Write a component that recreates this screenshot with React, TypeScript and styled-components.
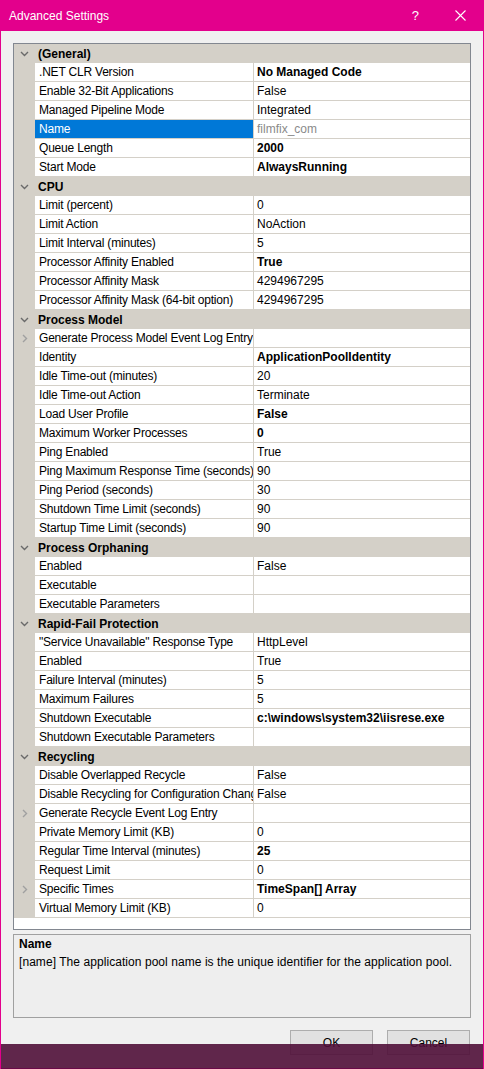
import React, { FC } from "react";
import styled, { createGlobalStyle } from "styled-components";

type Row = {
  label: string;
  value?: string;
  bold?: boolean;
  expand?: boolean;
  selected?: boolean;
  readOnly?: boolean;
};

type Category = { title: string; rows: Row[] };

const categories: Category[] = [
  {
    title: "(General)",
    rows: [
      { label: ".NET CLR Version", value: "No Managed Code", bold: true },
      { label: "Enable 32-Bit Applications", value: "False" },
      { label: "Managed Pipeline Mode", value: "Integrated" },
      { label: "Name", value: "filmfix_com", selected: true, readOnly: true },
      { label: "Queue Length", value: "2000", bold: true },
      { label: "Start Mode", value: "AlwaysRunning", bold: true },
    ],
  },
  {
    title: "CPU",
    rows: [
      { label: "Limit (percent)", value: "0" },
      { label: "Limit Action", value: "NoAction" },
      { label: "Limit Interval (minutes)", value: "5" },
      { label: "Processor Affinity Enabled", value: "True", bold: true },
      { label: "Processor Affinity Mask", value: "4294967295" },
      { label: "Processor Affinity Mask (64-bit option)", value: "4294967295" },
    ],
  },
  {
    title: "Process Model",
    rows: [
      { label: "Generate Process Model Event Log Entry", expand: true },
      { label: "Identity", value: "ApplicationPoolIdentity", bold: true },
      { label: "Idle Time-out (minutes)", value: "20" },
      { label: "Idle Time-out Action", value: "Terminate" },
      { label: "Load User Profile", value: "False", bold: true },
      { label: "Maximum Worker Processes", value: "0", bold: true },
      { label: "Ping Enabled", value: "True" },
      { label: "Ping Maximum Response Time (seconds)", value: "90" },
      { label: "Ping Period (seconds)", value: "30" },
      { label: "Shutdown Time Limit (seconds)", value: "90" },
      { label: "Startup Time Limit (seconds)", value: "90" },
    ],
  },
  {
    title: "Process Orphaning",
    rows: [
      { label: "Enabled", value: "False" },
      { label: "Executable" },
      { label: "Executable Parameters" },
    ],
  },
  {
    title: "Rapid-Fail Protection",
    rows: [
      { label: "\"Service Unavailable\" Response Type", value: "HttpLevel" },
      { label: "Enabled", value: "True" },
      { label: "Failure Interval (minutes)", value: "5" },
      { label: "Maximum Failures", value: "5" },
      { label: "Shutdown Executable", value: "c:\\windows\\system32\\iisrese.exe", bold: true },
      { label: "Shutdown Executable Parameters" },
    ],
  },
  {
    title: "Recycling",
    rows: [
      { label: "Disable Overlapped Recycle", value: "False" },
      { label: "Disable Recycling for Configuration Changes", value: "False" },
      { label: "Generate Recycle Event Log Entry", expand: true },
      { label: "Private Memory Limit (KB)", value: "0" },
      { label: "Regular Time Interval (minutes)", value: "25", bold: true },
      { label: "Request Limit", value: "0" },
      { label: "Specific Times", value: "TimeSpan[] Array", bold: true, expand: true },
      { label: "Virtual Memory Limit (KB)", value: "0" },
    ],
  },
];

const GlobalStyle = createGlobalStyle`
  html, body {
    margin: 0;
    padding: 0;
    background: #f0f0f0;
  }
  body {
    font-family: "Liberation Sans", Arial, sans-serif;
    font-size: 12px;
    color: #000;
  }
`;

const ChevronDown: FC = () => (
  <svg width="9" height="6" viewBox="0 0 9 6">
    <path d="M1 1 L4.5 4.5 L8 1" fill="none" stroke="#6a6a6a" strokeWidth="1.4" />
  </svg>
);

const ChevronRight: FC = () => (
  <svg width="6" height="9" viewBox="0 0 6 9">
    <path d="M1 1 L4.5 4.5 L1 8" fill="none" stroke="#a0a0a0" strokeWidth="1.4" />
  </svg>
);

const App: FC = () => {
  return (
    <>
      <GlobalStyle />
      <Window>
        <TitleBar>
          <span>Advanced Settings</span>
          <TitleButtons>
            <span className="help">?</span>
            <svg width="11" height="11" viewBox="0 0 11 11">
              <path d="M0.5 0.5 L10.5 10.5 M10.5 0.5 L0.5 10.5" stroke="#fff" strokeWidth="1.1" />
            </svg>
          </TitleButtons>
        </TitleBar>
        <Body>
          <Grid>
            {categories.map((cat) => (
              <React.Fragment key={cat.title}>
                <CategoryRow>
                  <Gutter>
                    <ChevronDown />
                  </Gutter>
                  <span>{cat.title}</span>
                </CategoryRow>
                {cat.rows.map((row, i) => (
                  <PropRow key={cat.title + i}>
                    <Gutter>{row.expand && <ChevronRight />}</Gutter>
                    <LabelCell $selected={row.selected}>{row.label}</LabelCell>
                    <ValueCell $bold={row.bold} $readOnly={row.readOnly}>
                      {row.value}
                    </ValueCell>
                  </PropRow>
                ))}
              </React.Fragment>
            ))}
            <GridFiller />
          </Grid>
          <Description>
            <h4>Name</h4>
            <p>[name] The application pool name is the unique identifier for the application pool.</p>
          </Description>
          <ButtonBar>
            <DialogButton>OK</DialogButton>
            <DialogButton>Cancel</DialogButton>
          </ButtonBar>
        </Body>
        <Taskbar />
      </Window>
    </>
  );
};

export default App;

const Window = styled.div`
  position: relative;
  width: 484px;
  height: 1069px;
  box-sizing: border-box;
  border-left: 1px solid #e3008c;
  border-right: 1px solid #e3008c;
  background: #f0f0f0;
  display: flex;
  flex-direction: column;
  overflow: hidden;
`;

const TitleBar = styled.div`
  height: 31px;
  flex: none;
  background: #e3008c;
  color: #fff;
  display: flex;
  align-items: center;
  justify-content: space-between;
  padding-left: 8px;
  font-size: 12px;
`;

const TitleButtons = styled.div`
  display: flex;
  align-items: center;
  gap: 36px;
  padding-right: 17px;

  .help {
    font-size: 13px;
  }
`;

const Body = styled.div`
  padding: 12px 12px 0 12px;
  display: flex;
  flex-direction: column;
`;

const Grid = styled.div`
  border: 1px solid #828790;
  background: #fff;
  display: flex;
  flex-direction: column;
  height: 885px;
`;

const Gutter = styled.div`
  width: 21px;
  flex: none;
  display: flex;
  align-items: center;
  justify-content: center;
  align-self: stretch;
  background: #d4d0c8;
`;

const CategoryRow = styled.div`
  height: 19px;
  flex: none;
  display: flex;
  align-items: center;
  background: #d4d0c8;
  font-weight: bold;

  span {
    padding-left: 3px;
  }
`;

const PropRow = styled.div`
  height: 19px;
  flex: none;
  display: flex;
`;

const LabelCell = styled.div<{ $selected?: boolean }>`
  width: 219px;
  flex: none;
  box-sizing: border-box;
  padding: 1px 0 0 4px;
  line-height: 17px;
  letter-spacing: -0.2px;
  white-space: nowrap;
  overflow: hidden;
  border-right: 1px solid #d4d0c8;
  border-bottom: 1px solid #d4d0c8;
  background: ${({ $selected }) => ($selected ? "#0078d7" : "#fff")};
  color: ${({ $selected }) => ($selected ? "#fff" : "#000")};
`;

const ValueCell = styled.div<{ $bold?: boolean; $readOnly?: boolean }>`
  flex: 1;
  padding: 1px 0 0 3px;
  line-height: 17px;
  white-space: nowrap;
  overflow: hidden;
  border-bottom: 1px solid #d4d0c8;
  font-weight: ${({ $bold }) => ($bold ? "bold" : "normal")};
  color: ${({ $readOnly }) => ($readOnly ? "#8a8a8a" : "#000")};
`;

const GridFiller = styled.div`
  flex: 1;
  background: #fff;
`;

const Description = styled.div`
  margin-top: 4px;
  height: 82px;
  border: 1px solid #a0a0a0;
  background: #eeeeee;
  padding: 0 5px;

  h4 {
    margin: 0;
    font-size: 12px;
    line-height: 18px;
    font-weight: bold;
  }

  p {
    margin: 0;
    line-height: 18px;
    letter-spacing: 0.06px;
  }
`;

const ButtonBar = styled.div`
  display: flex;
  justify-content: flex-end;
  gap: 14px;
  margin-top: 12px;
  padding-right: 1px;
`;

const DialogButton = styled.button`
  width: 83px;
  height: 25px;
  box-sizing: border-box;
  border: 1px solid #adadad;
  background: #e1e1e1;
  font-family: "Liberation Sans", Arial, sans-serif;
  font-size: 12px;
  color: #000;
  padding: 0;
`;

const Taskbar = styled.div`
  position: absolute;
  left: -1px;
  right: -1px;
  bottom: 0;
  height: 24px;
  background: rgba(80, 15, 56, 0.9);
  border-bottom: 1px solid #6a0a48;
`;
